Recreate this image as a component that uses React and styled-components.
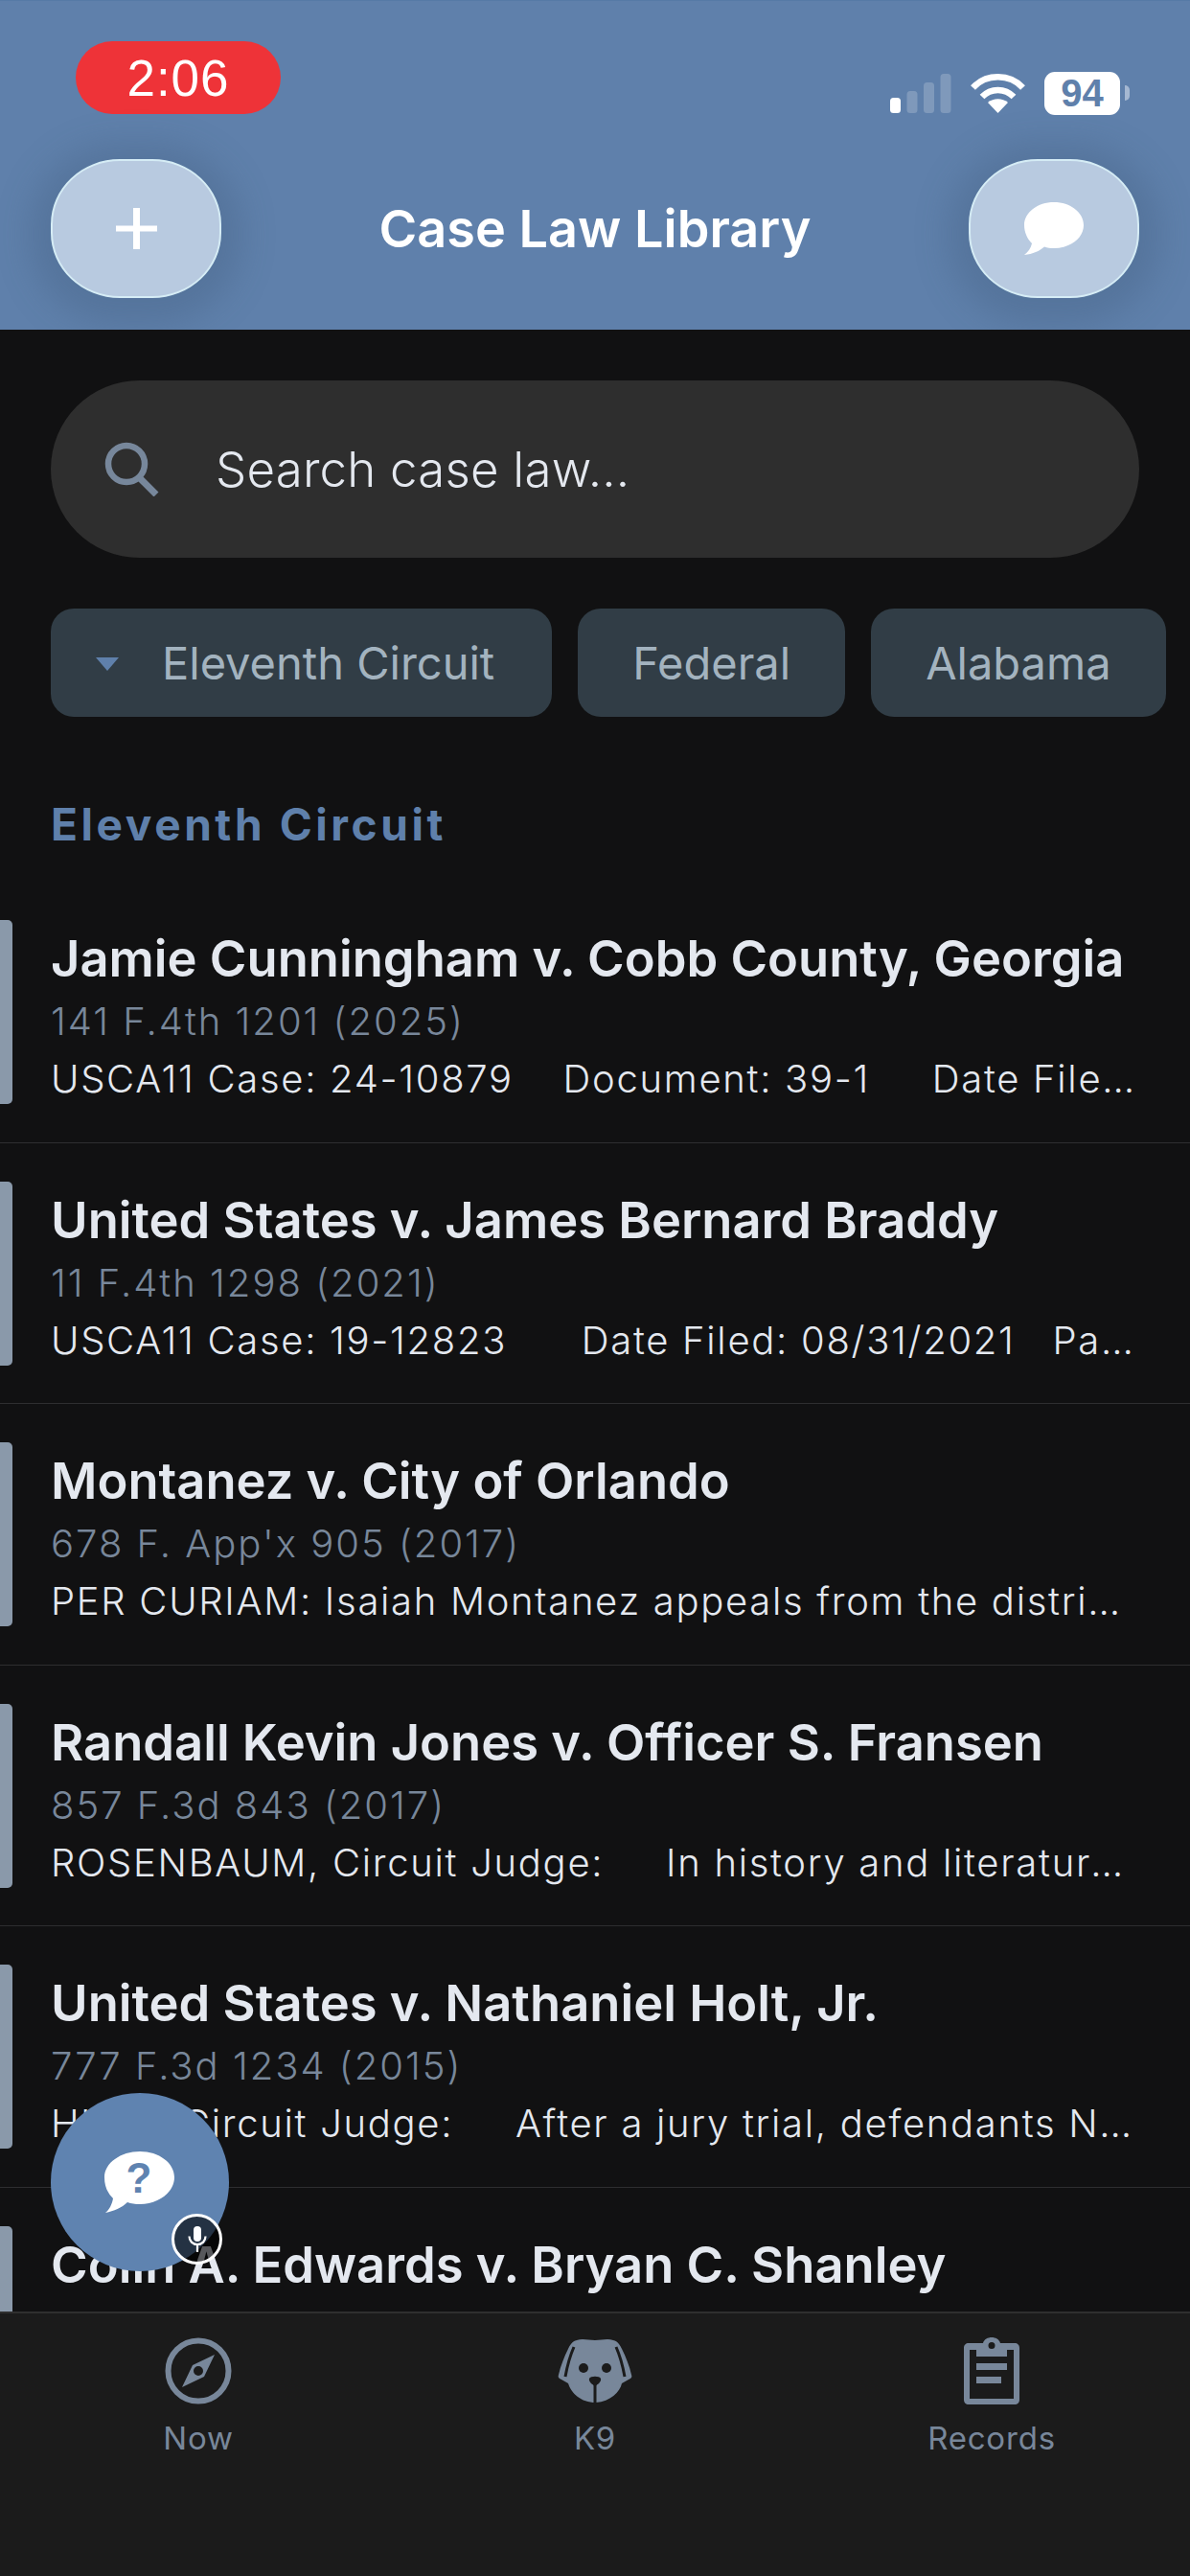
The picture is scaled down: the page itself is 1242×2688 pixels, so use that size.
import React from "react";
import styled, { createGlobalStyle } from "styled-components";

const Global = createGlobalStyle`
  html, body { margin: 0; padding: 0; background: #111111; }
  * { box-sizing: border-box; }
`;
const Screen = styled.div`
  position: relative; width: 1242px; height: 2688px; overflow: hidden;
  background: #111112; display: flex; flex-direction: column;
  font-family: Inter, "Liberation Sans", sans-serif;
`;
const Header = styled.header`
  flex: none; height: 344px; background: #5f80ab; display: flex; flex-direction: column;
  padding: 42px 53px 0 53px; border-top: 1px solid #567aa6; overflow: hidden;
`;
const StatusBar = styled.div`
  display: flex; align-items: flex-start; justify-content: space-between; height: 123px; padding-left: 26px;
`;
const TimePill = styled.div`
  width: 214px; height: 76px; border-radius: 38px; background: #ee3338; color: #fff;
  display: flex; align-items: center; justify-content: center; letter-spacing: 1px;
  font: 400 53px "Liberation Sans", sans-serif;
`;
const StatusIcons = styled.div`
  display: flex; align-items: center; margin-top: 32px; margin-right: 20px;
`;
const Signal = styled.svg`
  margin-right: 20px;
`;
const Wifi = styled.svg`
  margin-right: 20px;
`;
const Battery = styled.div`
  width: 79px; height: 45px; border-radius: 11px; background: #fff; color: #5f80ab;
  display: flex; align-items: center; justify-content: center;
  font: 700 40px "Liberation Sans", sans-serif; position: relative;
  &::after { content: ""; position: absolute; right: -10px; top: 14px; width: 5px; height: 16px; border-radius: 0 6px 6px 0; background: #a5b8d2; }
`;
const NavRow = styled.div`
  display: flex; align-items: center; justify-content: space-between;
`;
const RoundButton = styled.div`
  width: 178px; height: 145px; border-radius: 72px / 68px; background: #b8cae0;
  border: 2px solid #d5ecf5; box-shadow: 0 6px 34px 22px rgba(60,85,120,0.28);
  display: flex; align-items: center; justify-content: center;
`;
const Title = styled.h1`
  margin: 0; color: #fff; font-size: 54px; font-weight: 600; letter-spacing: 0;
`;
const Main = styled.main`
  flex: 1; min-height: 0; display: flex; flex-direction: column; overflow: hidden;
`;
const Search = styled.div`
  flex: none; margin: 53px 53px 0; height: 185px; border-radius: 93px; background: #2e2e2e;
  display: flex; align-items: center; padding-left: 56px; gap: 59px;
  color: #e4e8ef; font-size: 51px; font-weight: 350; letter-spacing: 0.2px;
`;
const Chips = styled.div`
  flex: none; display: flex; gap: 27px; margin: 53px 0 0 53px; white-space: nowrap;
`;
const Chip = styled.div`
  height: 113px; border-radius: 24px; background: #313d46; color: #a3b3bf;
  display: flex; align-items: center; gap: 45px; padding: 0 ${p => p.$right}px 0 ${p => p.$left}px;
  font-size: 47px; flex: none;
`;
const Caret = styled.span`
  width: 0; height: 0; border-left: 12.5px solid transparent; border-right: 12.5px solid transparent;
  border-top: 14px solid #5f80ab; margin-top: 2px;
`;
const Section = styled.h2`
  flex: none; margin: 86px 0 0 53px; color: #5f80ab; font-size: 46px; font-weight: 700; letter-spacing: 3.6px; line-height: 52px;
`;
const List = styled.div`
  flex: none; margin-top: 34px; display: flex; flex-direction: column;
`;
const Row = styled.article`
  position: relative; height: 272.6px; padding: 49px 53px 0 53px; border-bottom: 1px solid #2e2e30; flex: none;
  &::before { content: ""; position: absolute; left: 0; top: 40px; width: 13px; height: 192px; border-radius: 0 5px 5px 0; background: #8a99aa; }
`;
const CaseName = styled.div`
  color: #e4e8ef; font-size: 52.500px; font-weight: 600; line-height: 62px; white-space: nowrap;
`;
const Cite = styled.div`
  color: #78879a; font-size: 40px; letter-spacing: 2px; line-height: 50px; margin-top: 10px; white-space: nowrap; font-weight: 300;
`;
const Snippet = styled.div`
  color: #e4e8ef; font-size: 40px; letter-spacing: 1.700px; line-height: 50px; margin-top: 10px; width: 1132px;
  white-space: pre; overflow: hidden; text-overflow: ellipsis; font-weight: 350;
`;
const Fab = styled.div`
  position: absolute; left: 53px; top: 2184px; width: 186px; height: 186px; border-radius: 50%; background: #5f83b0;
  display: flex; align-items: center; justify-content: center;
`;
const MicBadge = styled.div`
  position: absolute; right: 7px; bottom: 7px; width: 53px; height: 53px; border-radius: 50%;
  border: 3px solid #fff; display: flex; align-items: center; justify-content: center;
  background: rgba(0,0,0,0.62);
`;
const TabBar = styled.nav`
  flex: none; height: 276px; background: #1b1b1b; border-top: 2px solid #2f2f2f;
  display: grid; grid-template-columns: repeat(3, 1fr); padding: 24px 0 0 0;
`;
const Tab = styled.div`
  display: flex; flex-direction: column; align-items: center; color: #78879a; font-size: 33px; letter-spacing: 0.8px;
  gap: 14px;
`;
const IconBox = styled.div`
  height: 72px; display: flex; align-items: center; justify-content: center;
`;

const cases = [
  ["Jamie Cunningham v. Cobb County, Georgia", "141 F.4th 1201 (2025)", "USCA11 Case: 24-10879    Document: 39-1     Date Filed: 06/18/2025"],
  ["United States v. James Bernard Braddy", "11 F.4th 1298 (2021)", "USCA11 Case: 19-12823      Date Filed: 08/31/2021   Page: 1 of 30"],
  ["Montanez v. City of Orlando", "678 F. App'x 905 (2017)", "PER CURIAM: Isaiah Montanez appeals from the district court's order"],
  ["Randall Kevin Jones v. Officer S. Fransen", "857 F.3d 843 (2017)", "ROSENBAUM, Circuit Judge:     In history and literature, there are"],
  ["United States v. Nathaniel Holt, Jr.", "777 F.3d 1234 (2015)", "HULL, Circuit Judge:     After a jury trial, defendants Nathaniel Holt"],
  ["Colin A. Edwards v. Bryan C. Shanley", "", ""],
];

export default function App() {
  return (
    <Screen>
      <Global />
      <Header>
        <StatusBar>
          <TimePill>2:06</TimePill>
          <StatusIcons>
            <Signal width="64" height="41" viewBox="0 0 64 41">
              <rect x="0" y="25" width="11" height="16" rx="3.500" fill="#fff" />
              <rect x="17.500" y="18" width="11" height="23" rx="3.500" fill="#fff" opacity=".2" />
              <rect x="35" y="9" width="11" height="32" rx="3.500" fill="#fff" opacity=".2" />
              <rect x="52.500" y="0" width="11" height="41" rx="3.500" fill="#fff" opacity=".2" />
            </Signal>
            <Wifi width="57" height="41" viewBox="0 0 57 41" fill="none" stroke="#fff" strokeWidth="6.500">
              <path d="M2.500 14.500C16-.5 41-.5 54.500 14.500" />
              <path d="M12 24c9-9.500 24-9.500 33 0" />
              <path d="M28.500 41 18 30c6-5 15-5 21 0Z" fill="#fff" stroke="none" />
            </Wifi>
            <Battery>94</Battery>
          </StatusIcons>
        </StatusBar>
        <NavRow>
          <RoundButton>
            <svg width="43" height="43" viewBox="0 0 43 43"><path d="M18 0h7v18.500h18v6H25V43h-7V24.500H0v-6h18Z" fill="#fff" /></svg>
          </RoundButton>
          <Title>Case Law Library</Title>
          <RoundButton>
            <svg width="62" height="55" viewBox="0 0 62 55"><path d="M31 0c17 0 31 10.500 31 24S48 48 31 48c-4 0-7-.5-10-1.500C16 51 9 54 0 55c4-3 7-7 8-12C3 38 0 31 0 24 0 10.500 14 0 31 0Z" fill="#fff" /></svg>
          </RoundButton>
        </NavRow>
      </Header>
      <Main>
        <Search>
          <svg width="57" height="57" viewBox="0 0 57 57" fill="none" stroke="#77879b" strokeWidth="6.500">
            <circle cx="23" cy="23" r="19" />
            <path d="M35 36 54 55" strokeWidth="7" />
          </svg>
          <span>Search case law...</span>
        </Search>
        <Chips>
          <Chip $left={47} $right={60}><Caret />Eleventh Circuit</Chip>
          <Chip $left={57} $right={57}>Federal</Chip>
          <Chip $left={57} $right={57}>Alabama</Chip>
          <Chip $left={57} $right={57}>Georgia</Chip>
        </Chips>
        <Section>Eleventh Circuit</Section>
        <List>
          {cases.map(c => (
            <Row key={c[0]}>
              <CaseName>{c[0]}</CaseName>
              <Cite>{c[1]}</Cite>
              <Snippet>{c[2]}</Snippet>
            </Row>
          ))}
        </List>
      </Main>
      <TabBar>
        <Tab>
          <IconBox>
            <svg width="70" height="70" viewBox="0 0 70 70">
              <circle cx="35" cy="35" r="31.500" fill="none" stroke="#78879a" strokeWidth="6" />
              <path fillRule="evenodd" fill="#78879a" d="M52 18 41 41 18 52 29 29ZM35 30a5 5 0 1 0 0 10 5 5 0 0 0 0-10Z" />
            </svg>
          </IconBox>
          Now
        </Tab>
        <Tab>
          <IconBox>
            <svg width="78" height="68" viewBox="0 0 78 68">
              <path fill="#78879a" d="M20 2c6-2 12 0 19 0s13-2 19 0c5 1 7 5 9 9 4 8 8 18 10 27 1 2 0 4-3 5l-7 4c-2 9-12 19-27 20-16 0-26-10-29-20l-7-4c-3-1-4-3-3-5 2-9 6-19 10-27 2-4 4-8 9-9Z" />
              <path fill="none" stroke="#1b1b1b" strokeWidth="3" d="M17 9C13 18 10 29 8 40M61 9c4 9 7 20 9 31" />
              <circle cx="27" cy="31" r="5" fill="#1b1b1b" /><circle cx="51" cy="31" r="5" fill="#1b1b1b" />
              <path fill="#1b1b1b" d="M39 50c-3-2-7-5-6-8 1-3 11-3 12 0 1 3-3 6-6 8Z" />
              <path stroke="#1b1b1b" strokeWidth="3" d="M39 46v22" />
            </svg>
          </IconBox>
          K9
        </Tab>
        <Tab>
          <IconBox>
            <svg width="58" height="70" viewBox="0 0 58 70">
              <path fillRule="evenodd" fill="#78879a" d="M5 6h15c1-4 5-6 9-6s8 2 9 6h15c3 0 5 2 5 5v54c0 3-2 5-5 5H5c-3 0-5-2-5-5V11c0-3 2-5 5-5Zm24-1a3.500 3.500 0 1 0 0 7 3.500 3.500 0 0 0 0-7ZM6 13v51h46V13h-7v7H13v-7Z" />
              <path fill="#78879a" d="M13 27h32v7H13zM13 41h26v7H13z" />
            </svg>
          </IconBox>
          Records
        </Tab>
      </TabBar>
      <Fab>
        <svg width="74" height="64" viewBox="0 0 74 64">
          <path fill="#fff" d="M37 0c20 0 36 12 36 27S57 55 37 55c-5 0-9-.5-13-2C18 59 10 62 1 64c4-3 7-9 8-15C3 43 0 36 0 27 0 12 17 0 37 0Z" />
          <text x="36" y="43" textAnchor="middle" fill="#5f83b0" style={{ font: '900 44px "Liberation Sans", sans-serif' }}>?</text>
        </svg>
        <MicBadge>
          <svg width="20" height="27" viewBox="0 0 20 27" fill="none" stroke="#fff" strokeWidth="2.200">
            <rect x="6" y="0" width="8" height="16" rx="4" fill="#fff" stroke="none" />
            <path d="M1.500 10.500c0 5 3.500 8.500 8.500 8.500s8.500-3.500 8.500-8.500M10 19v8" />
          </svg>
        </MicBadge>
      </Fab>
    </Screen>
  );
}
